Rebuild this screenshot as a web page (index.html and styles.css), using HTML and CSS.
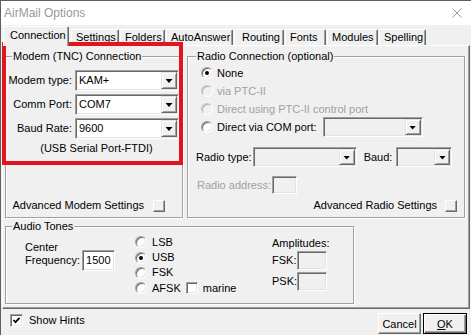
FILE: index.html
```html
<!DOCTYPE html>
<html lang="en">
<head>
    <meta charset="UTF-8">
    <meta name="viewport" content="width=device-width, initial-scale=1.0">
    <title>AirMail Options</title>
    <link rel="stylesheet" href="styles.css">
</head>
<body>
<div class="window">
    <div class="titlebar">
        <span class="title">AirMail Options</span>
        <svg class="close" width="10" height="10" viewBox="0 0 10 10"><path d="M0.5 0.5 L9.5 9.5 M9.5 0.5 L0.5 9.5" stroke="#999" stroke-width="1" fill="none"/></svg>
    </div>

    <div class="client">
        <div class="tabs">
            <div class="tab active">Connection</div>
            <div class="tab">Settings</div>
            <div class="tab">Folders</div>
            <div class="tab">AutoAnswer</div>
            <div class="tab">Routing</div>
            <div class="tab">Fonts</div>
            <div class="tab">Modules</div>
            <div class="tab">Spelling</div>
        </div>

        <div class="sheet">
            <div class="top-row">
                <fieldset class="group modem">
                    <legend>Modem (TNC) Connection</legend>
                    <div class="field">
                        <label>Modem type:</label>
                        <div class="combo"><span class="value">KAM+</span><span class="drop"></span></div>
                    </div>
                    <div class="field">
                        <label>Comm Port:</label>
                        <div class="combo"><span class="value">COM7</span><span class="drop"></span></div>
                    </div>
                    <div class="field">
                        <label>Baud Rate:</label>
                        <div class="combo"><span class="value">9600</span><span class="drop"></span></div>
                    </div>
                    <div class="port-note">(USB Serial Port-FTDI)</div>
                    <div class="adv">Advanced Modem Settings<span class="mini-btn"></span></div>
                </fieldset>

                <fieldset class="group radio-conn">
                    <legend>Radio Connection (optional)</legend>
                    <div class="opt first"><span class="radio checked"></span>None</div>
                    <div class="opt disabled"><span class="radio"></span>via PTC-II</div>
                    <div class="opt disabled"><span class="radio"></span>Direct using PTC-II control port</div>
                    <div class="opt"><span class="radio"></span>Direct via COM port:<div class="combo off com-combo"><span class="drop"></span></div></div>
                    <div class="radio-type">
                        <span>Radio type:</span>
                        <div class="combo off type-combo"><span class="drop"></span></div>
                        <span class="baud-label">Baud:</span>
                        <div class="combo off baud-combo"><span class="drop"></span></div>
                    </div>
                    <div class="address disabled">
                        <span>Radio address:</span>
                        <span class="edit off addr-box"></span>
                    </div>
                    <div class="adv radio-adv">Advanced Radio Settings<span class="mini-btn"></span></div>
                </fieldset>
            </div>

            <fieldset class="group audio">
                <legend>Audio Tones</legend>
                <div class="freq">
                    <div class="freq-label">Center<br>Frequency:</div>
                    <div class="edit freq-box">1500</div>
                </div>
                <div class="modes">
                    <div class="mode"><span class="radio"></span>LSB</div>
                    <div class="mode"><span class="radio checked"></span>USB</div>
                    <div class="mode"><span class="radio"></span>FSK</div>
                    <div class="mode"><span class="radio"></span>AFSK<span class="check small"></span><span class="marine">marine</span></div>
                </div>
                <div class="amps">
                    <div>Amplitudes:</div>
                    <div class="amp fsk"><span class="amp-label">FSK:</span><span class="edit off amp-box"></span></div>
                    <div class="amp psk"><span class="amp-label">PSK:</span><span class="edit off amp-box"></span></div>
                </div>
            </fieldset>
        </div>

        <div class="footer">
            <div class="hints">
                <span class="check"><svg width="9" height="9" viewBox="0 0 9 9"><path d="M1.5 4 L3.5 6.2 L7.6 1.8" stroke="#000" stroke-width="1.7" fill="none"/></svg></span>
                Show Hints
            </div>
            <div class="buttons">
                <button class="btn">Cancel</button>
                <button class="btn default"><u>O</u>K</button>
            </div>
        </div>
    </div>

    <!-- annotation drawn over the modem group -->
    <div class="highlight"></div>
</div>
</body>
</html>
```

FILE: styles.css
```css
body {
    margin: 0;
    background: #f0f0f0;
    font-family: "Liberation Sans", Arial, sans-serif;
    font-size: 11px;
    line-height: 13px;
    color: #000;
}
.window {
    position: relative;
    width: 471px;
    height: 335px;
    box-sizing: border-box;
    border-top: 1px solid #5f5f5f;
    border-left: 1px solid #5f5f5f;
    background: #f0f0f0;
    overflow: hidden;
}
.titlebar {
    height: 24px;
    background: #fff;
    display: flex;
    align-items: center;
    justify-content: space-between;
    padding: 0 9px 0 3px;
}
.title {
    font-size: 12px;
    color: #999;
}

/* tabs */
.tabs {
    display: flex;
    align-items: flex-end;
    height: 20px;
    padding-left: 2px;
}
.tab {
    box-sizing: border-box;
    height: 16px;
    border: 1px solid #fff;
    border-bottom: 0;
    border-right-color: #696969;
    box-shadow: inset -1px 0 #a0a0a0;
    border-radius: 2px 2px 0 0;
    padding: 1px 0 0 4px;
    margin-right: 1px;
    white-space: nowrap;
}
.tab.active {
    height: 20px;
    margin-bottom: -1px;
    margin-right: 2px;
    padding: 2px 0 0 6px;
    background: #f0f0f0;
    position: relative;
    z-index: 1;
}
.tab:nth-child(1) { width: 66px; }
.tab:nth-child(2) { width: 48px; }
.tab:nth-child(3) { width: 45px; }
.tab:nth-child(4) { width: 67px; }
.tab:nth-child(5) { width: 50px; padding-left: 7px; }
.tab:nth-child(6) { width: 41px; }
.tab:nth-child(7) { width: 51px; }
.tab:nth-child(8) { width: 47px; }

.sheet {
    box-sizing: border-box;
    width: 468px;
    height: 264px;
    margin-left: 1px;
    border: 1px solid;
    border-color: #fff #696969 #696969 #fff;
    box-shadow: inset -1px -1px #a0a0a0;
    padding: 4px 0 0 2px;
}
.top-row {
    display: flex;
    gap: 4px;
}

/* group boxes */
.group {
    margin: 0;
    padding: 0;
    min-width: 0;
    box-sizing: border-box;
    border: 1px solid #a0a0a0;
    box-shadow: inset 1px 1px #fff, 1px 1px #fff;
    display: flex;
    flex-direction: column;
}
.group legend {
    padding: 0 1px;
    margin-left: 6px;
    background: #f0f0f0;
    line-height: 13px;
}
.modem {
    width: 178px;
    height: 168px;
}
.radio-conn {
    width: 278px;
    height: 168px;
}
.radio-conn legend {
    margin-left: 8px;
}
.audio {
    width: 349px;
    height: 84px;
    margin-top: 2px;
    flex-direction: row;
    align-items: flex-start;
}

/* controls */
.combo {
    box-sizing: border-box;
    width: 104px;
    height: 21px;
    border: 1px solid;
    border-color: #a0a0a0 #fff #fff #a0a0a0;
    box-shadow: inset 1px 1px #696969, inset -1px -1px #e3e3e3;
    background: #fff;
    display: flex;
    align-items: center;
    padding: 0 1px 0 3px;
}
.combo.off {
    background: #f0f0f0;
    height: 20px;
}
.drop {
    margin-left: auto;
    box-sizing: border-box;
    width: 16px;
    height: 17px;
    border: 1px solid;
    border-color: #e3e3e3 #696969 #696969 #e3e3e3;
    box-shadow: inset 1px 1px #fff, inset -1px -1px #a0a0a0;
    background: #f0f0f0;
    display: flex;
    align-items: center;
    justify-content: center;
}
.combo.off .drop {
    height: 16px;
}
.drop::after {
    content: "";
    width: 7px;
    height: 4px;
    margin-top: 1px;
    background: #000;
    clip-path: polygon(0 0, 100% 0, 50% 100%);
}
.edit {
    box-sizing: border-box;
    border: 1px solid;
    border-color: #a0a0a0 #fff #fff #a0a0a0;
    box-shadow: inset 1px 1px #696969, inset -1px -1px #e3e3e3;
    background: #fff;
}
.edit.off {
    background: #f0f0f0;
}
.mini-btn {
    box-sizing: border-box;
    width: 12px;
    height: 12px;
    border: 1px solid;
    border-color: #fff #696969 #696969 #fff;
    box-shadow: inset -1px -1px #a0a0a0;
    background: #f0f0f0;
}
.radio {
    box-sizing: border-box;
    width: 12px;
    height: 12px;
    flex: none;
    border-radius: 50%;
    border: 1px solid;
    border-color: #a0a0a0 #fff #fff #a0a0a0;
    box-shadow: inset 1px 1px #696969, inset -1px -1px #e3e3e3;
    background: #fff;
    display: flex;
    align-items: center;
    justify-content: center;
}
.radio.checked::after {
    content: "";
    width: 4px;
    height: 4px;
    border-radius: 50%;
    background: #000;
}
.disabled {
    color: #a0a0a0;
}
.disabled .radio {
    background: #f0f0f0;
    border-color: #c8c8c8 #fff #fff #c8c8c8;
    box-shadow: inset 1px 1px #b4b4b4;
}
.check {
    box-sizing: border-box;
    width: 13px;
    height: 13px;
    flex: none;
    border: 1px solid;
    border-color: #a0a0a0 #fff #fff #a0a0a0;
    box-shadow: inset 1px 1px #696969, inset -1px -1px #e3e3e3;
    background: #fff;
    display: flex;
    align-items: center;
    justify-content: center;
}
.check.small {
    width: 12px;
    height: 12px;
}

/* modem group */
.field {
    display: flex;
    align-items: center;
    margin-top: 3px;
}
.field:first-of-type {
    margin-top: 7px;
}
.field label {
    width: 66px;
    margin-right: 3px;
    text-align: right;
}
.port-note {
    margin-top: 3px;
    padding-left: 5px;
    text-align: center;
}
.adv {
    margin-top: auto;
    margin-bottom: 5px;
    display: flex;
    align-items: center;
    justify-content: flex-end;
    gap: 9px;
    padding-right: 17px;
}

/* radio group */
.opt {
    display: flex;
    align-items: center;
    height: 18px;
    padding-left: 13px;
}
.opt .radio {
    margin-right: 4px;
}
.opt.first {
    margin-top: 1px;
}
.com-combo {
    width: 100px;
    margin-left: 6px;
}
.radio-type {
    display: flex;
    align-items: center;
    height: 20px;
    margin-top: 11px;
    padding-left: 8px;
}
.type-combo {
    margin-left: 1px;
}
.baud-label {
    margin-left: 7px;
}
.baud-combo {
    width: 56px;
    margin-left: 4px;
}
.address {
    display: flex;
    align-items: center;
    height: 18px;
    margin-top: 9px;
    padding-left: 9px;
}
.addr-box {
    width: 25px;
    height: 18px;
    margin-left: 1px;
}
.radio-adv {
    gap: 8px;
    padding-right: 7px;
}

/* audio tones */
.freq {
    display: flex;
    align-items: flex-end;
    margin: 8px 0 0 19px;
}
.freq-label {
    padding-bottom: 4px;
}
.freq-box {
    width: 33px;
    height: 21px;
    margin-left: 2px;
    padding: 3px 0 0 3px;
}
.modes {
    width: 137px;
    margin: 1.5px 0 0 20px;
}
.mode {
    display: flex;
    align-items: center;
    height: 15.4px;
}
.mode .radio {
    margin-right: 5px;
}
.mode .check {
    margin-left: 5px;
}
.marine {
    margin-left: 5px;
}
.amps {
    margin-top: 3.5px;
}
.amp {
    display: flex;
    align-items: center;
}
.amp.fsk {
    margin-top: 1.5px;
}
.amp.psk {
    margin-top: 2px;
}
.amp-label {
    width: 25px;
}
.amp-box {
    width: 30px;
    height: 19px;
}

/* footer */
.footer {
    display: flex;
    align-items: flex-start;
    height: 26px;
    padding: 0 4px 0 9px;
}
.hints {
    display: flex;
    align-items: center;
    gap: 6px;
    margin-top: 5px;
}
.buttons {
    display: flex;
    gap: 2px;
    margin-left: auto;
    margin-top: 4px;
}
.btn {
    box-sizing: border-box;
    width: 43px;
    height: 21px;
    padding: 0;
    font-family: inherit;
    font-size: 11px;
    color: #000;
    background: #f0f0f0;
    border: 1px solid;
    border-color: #fff #696969 #696969 #fff;
    box-shadow: inset -1px -1px #a0a0a0;
    border-radius: 0;
}
.btn.default {
    width: 44px;
    border-color: #000;
    box-shadow: inset 1px 1px #fff, inset -1px -1px #696969, inset -2px -2px #a0a0a0;
}

/* red annotation frame */
.highlight {
    position: absolute;
    left: 1px;
    top: 41px;
    width: 181px;
    height: 123px;
    box-sizing: border-box;
    border: 4px solid #e3141c;
}
```
